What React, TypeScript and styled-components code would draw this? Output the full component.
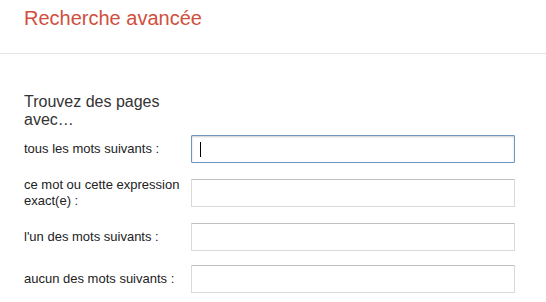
import React from "react";
import styled, { createGlobalStyle } from "styled-components";

const GlobalStyle = createGlobalStyle`
  body {
    margin: 0;
    background: #fff;
    font-family: "Liberation Sans", Arial, sans-serif;
  }
`;

const fields = [
  { label: "tous les mots suivants :", focused: true },
  { label: "ce mot ou cette expression exact(e) :" },
  { label: "l'un des mots suivants :" },
  { label: "aucun des mots suivants :" },
];

const App = () => {
  return (
    <Page>
      <GlobalStyle />
      <Header>
        <Title>Recherche avancée</Title>
      </Header>
      <Content>
        <SectionTitle>Trouvez des pages avec…</SectionTitle>
        <Form>
          {fields.map((f) => (
            <Row key={f.label}>
              <Label>{f.label}</Label>
              <InputWrap>
                <Input type="text" $focused={!!f.focused} />
                {f.focused && <Caret />}
              </InputWrap>
            </Row>
          ))}
        </Form>
      </Content>
    </Page>
  );
};

export default App;

const Page = styled.div`
  width: 546px;
  height: 302px;
  overflow: hidden;
`;

const Header = styled.div`
  height: 54px;
  box-sizing: border-box;
  padding: 6px 0 0 24px;
  border-bottom: 1px solid #e5e5e5;
`;

const Title = styled.h1`
  margin: 0;
  font-size: 20px;
  font-weight: normal;
  line-height: 24px;
  color: #d04f3d;
`;

const Content = styled.div`
  padding: 39px 0 0 24px;
`;

const SectionTitle = styled.h2`
  margin: 0;
  width: 150px;
  font-size: 16px;
  font-weight: normal;
  line-height: 18px;
  color: #333;
`;

const Form = styled.div`
  display: flex;
  flex-direction: column;
  gap: 14px;
  margin-top: 6px;
`;

const Row = styled.div`
  display: grid;
  grid-template-columns: 167px 324px;
  align-items: center;
`;

const Label = styled.label`
  font-size: 13px;
  line-height: 16px;
  color: #222;
  padding-right: 8px;
`;

const InputWrap = styled.div`
  position: relative;
  height: 28px;
`;

const Input = styled.input<{ $focused: boolean }>`
  display: block;
  box-sizing: border-box;
  width: 324px;
  height: 28px;
  margin: 0;
  padding: 0 8px;
  font-family: inherit;
  font-size: 13px;
  outline: none;
  background: #fff;
  border: 1px solid ${({ $focused }) => ($focused ? "#7196be" : "#d9d9d9")};
  border-top-color: ${({ $focused }) => ($focused ? "#7196be" : "#c0c0c0")};
  border-radius: 1px;
  box-shadow: ${({ $focused }) =>
    $focused ? "inset 0 1px 2px rgba(0,0,0,0.2)" : "none"};
`;

const Caret = styled.span`
  position: absolute;
  left: 9px;
  top: 7px;
  width: 1px;
  height: 15px;
  background: #000;
`;
